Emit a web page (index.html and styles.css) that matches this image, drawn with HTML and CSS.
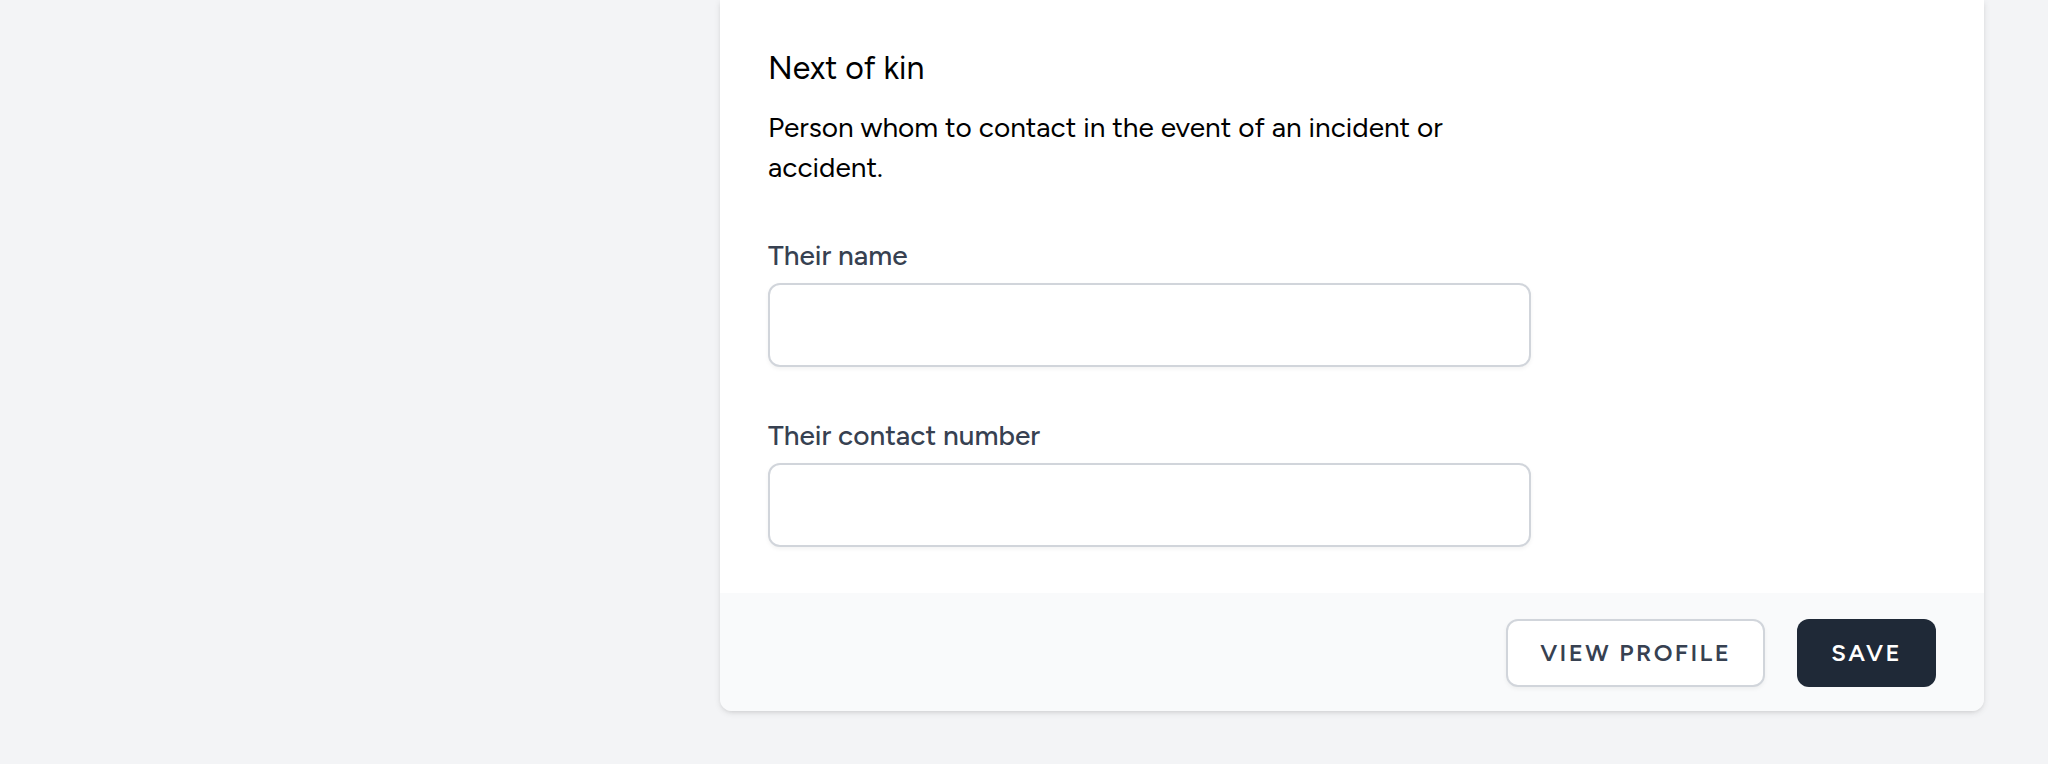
FILE: index.html
```html
<!DOCTYPE html>
<html lang="en">
<head>
<meta charset="utf-8">
<meta name="viewport" content="width=device-width, initial-scale=1">
<title>Next of kin</title>
<link rel="stylesheet" href="styles.css">
</head>
<body>
<main class="page">
  <form class="card">
    <div class="card-body">
      <div class="intro">
        <h2 class="title">Next of kin</h2>
        <p class="description">Person whom to contact in the event of an incident or accident.</p>
      </div>
      <div class="field">
        <label class="label" for="kin-name">Their name</label>
        <input class="input" id="kin-name" type="text">
      </div>
      <div class="field">
        <label class="label" for="kin-number">Their contact number</label>
        <input class="input" id="kin-number" type="text">
      </div>
    </div>
    <div class="card-footer">
      <button class="button button-secondary" type="button">View profile</button>
      <button class="button button-primary" type="submit">Save</button>
    </div>
  </form>
</main>
</body>
</html>
```
FILE: styles.css
```css
*, *::before, *::after {
  box-sizing: border-box;
}

body {
  margin: 0;
  background: #f3f4f6;
  color: #000;
  font-family: Figtree, Lato, "Open Sans", sans-serif;
  font-size: 28px;
  line-height: 40px;
}

.page {
  display: grid;
  grid-template-columns: repeat(3, minmax(0, 1fr));
  column-gap: 48px;
  padding: 0 64px 52px;
}

.card {
  grid-column: 2 / span 2;
  border-radius: 0 0 12px 12px;
  box-shadow: 0 2px 6px rgba(0, 0, 0, 0.1), 0 2px 4px -2px rgba(0, 0, 0, 0.1);
}

.card-body {
  display: grid;
  grid-template-columns: repeat(6, minmax(0, 1fr));
  column-gap: 48px;
  row-gap: 48px;
  padding: 44px 48px 46px;
  background: #fff;
}

.intro,
.field {
  grid-column: span 4;
}

.title {
  margin: 0 0 15px;
  font-size: 32px;
  font-weight: 400;
  line-height: 48px;
}

.description {
  max-width: 720px;
  margin: 0;
}

.field {
  display: flex;
  flex-direction: column;
  gap: 8px;
}

.label {
  color: #374151;
  font-weight: 500;
}

.input {
  width: 100%;
  height: 84px;
  padding: 16px 24px;
  border: 2px solid #d1d5db;
  border-radius: 12px;
  background: #fff;
  box-shadow: 0 2px 4px rgba(0, 0, 0, 0.05);
  font: inherit;
}

.card-footer {
  display: flex;
  justify-content: flex-end;
  gap: 32px;
  padding: 26px 48px 24px;
  border-radius: 0 0 12px 12px;
  background: #f9fafb;
}

.button {
  padding: 16px 32px;
  border: 2px solid transparent;
  border-radius: 12px;
  font-family: inherit;
  font-size: 24px;
  font-weight: 600;
  line-height: 32px;
  letter-spacing: 0.1em;
  text-transform: uppercase;
}

.button-secondary {
  border-color: #d1d5db;
  background: #fff;
  color: #374151;
  box-shadow: 0 2px 4px rgba(0, 0, 0, 0.05);
}

.button-primary {
  background: #1f2937;
  color: #fff;
}
```
